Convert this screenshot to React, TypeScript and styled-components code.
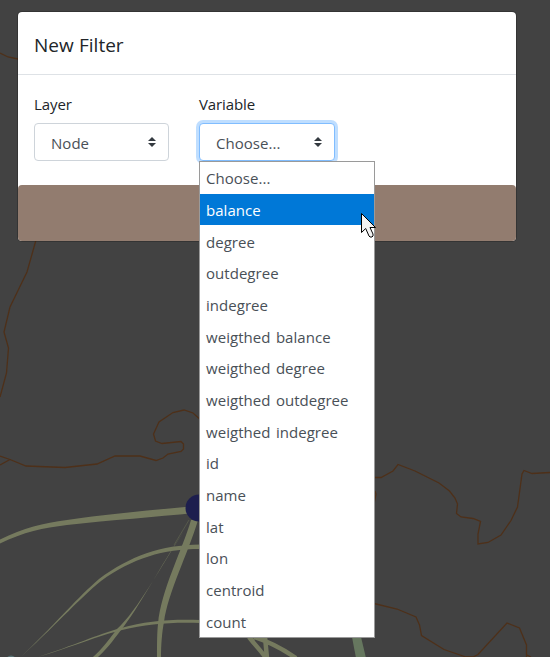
import React from "react";
import styled, { createGlobalStyle } from "styled-components";

const GlobalStyle = createGlobalStyle`
  * { box-sizing: border-box; }
  body {
    margin: 0;
    background: #424242;
    color: #212529;
    font-family: "Open Sans", "Noto Sans", sans-serif;
    font-size: 15px;
    line-height: 24px;
    letter-spacing: 0.04px;
    word-spacing: 1.5px;
  }
`;

const Page = styled.div`
  position: relative;
  width: 550px;
  height: 657px;
  overflow: hidden;
  padding: 11px 0 0 17px;
`;

const MapLayer = styled.svg`
  position: absolute;
  inset: 0;
  display: block;
`;

const Dialog = styled.section`
  position: relative;
  width: 500px;
  height: 231px;
  display: flex;
  flex-direction: column;
  border: 1px solid rgba(0, 0, 0, 0.2);
  border-radius: 5px;
  background: #fff;
  background-clip: padding-box;
`;

const DialogHeader = styled.header`
  height: 63px;
  padding: 16px;
  border-bottom: 1px solid #dee2e6;
`;

const Title = styled.h5`
  margin: 0;
  font-size: 19px;
  font-weight: 400;
  line-height: 34px;
  letter-spacing: -0.02px;
  word-spacing: 0.5px;
`;

const DialogBody = styled.div`
  flex: 1;
  display: grid;
  grid-template-columns: 135px 136px;
  column-gap: 30px;
  padding: 17px 16px 0;
`;

const DialogFooter = styled.footer`
  height: 56px;
  border-radius: 4px;
  background: #927c6f;
`;

const Field = styled.div`
  position: relative;
`;

const Label = styled.div`
  margin-bottom: 7px;
  letter-spacing: -0.1px;
`;

const SelectBox = styled.div<{ $focused?: boolean }>`
  display: flex;
  align-items: center;
  justify-content: space-between;
  height: 38px;
  padding: 2px 12px 0 16px;
  border: 1px solid ${(p) => (p.$focused ? "#80bdff" : "#ced4da")};
  border-radius: 4px;
  background: #fff;
  color: #495057;
  box-shadow: ${(p) => (p.$focused ? "0 0 0 3px rgba(0, 123, 255, 0.25)" : "none")};
`;

const Arrows = styled.svg`
  width: 8px;
  height: 10px;
  margin-top: -2px;
`;

const OptionList = styled.ul`
  position: absolute;
  top: 69px;
  left: 0;
  width: 176px;
  height: 477px;
  margin: 0;
  padding: 0;
  list-style: none;
  display: grid;
  grid-template-rows: repeat(15, 1fr);
  border: 1px solid #9a9a9a;
  background: #fff;
  color: #495057;
`;

const Option = styled.li<{ $active: boolean }>`
  padding: 4.3px 6px 0;
  background: ${(p) => (p.$active ? "#0078d7" : "transparent")};
  color: ${(p) => (p.$active ? "#fff" : "inherit")};
`;

const Pointer = styled.svg`
  position: absolute;
  left: 361px;
  top: 212px;
`;

const options = [
  "Choose...", "balance", "degree", "outdegree", "indegree",
  "weigthed balance", "weigthed degree", "weigthed outdegree", "weigthed indegree",
  "id", "name", "lat", "lon", "centroid", "count",
];

const borders = [
  "M0 53 L8 57 L18 59",
  "M36 240 L27 272 L10 307 L4 332 L8.500 348 L6.500 373 L0 397",
  "M0 456 L10 459.500 L26 466 L65 467.500 L97 464 L115 456 H140 L156 460.500 L163 458 L168 454 L181 451.500 L183.500 449 V444 L181 441.500 L162 443.500 L155.500 441 L153.500 434 L159 422 L173 412.500 L184 410 L193 413 L203 422",
  "M0 465 L10 459.500",
  "M374 477.500 H381 L393 471 L398 464.500 L415 471 L439 483 L449.500 491 L455 498 L457.500 504 L456.500 513.500 L461 517 L473 518.500 L480.500 521.500 L478 534 V544 L488 542.500 L501 535 L511 520.500 L517.500 507 L522 474 L524 470.500 L532 473.500 L550 472.500",
  "M375 491 L376 494 L374 504",
  "M374 603.500 L397 609 L416 617 L419.500 625 L421.500 635.500 L444 649.500 L466 657 H473 L478 654.500 L507 623 L519.500 628 L526.500 645 V657 M526 654.500 L531 657",
];

const ribbons = [
  "M-1 540 C23 528 43 523 67 520 C105 514 155 510 195 506 V513 C155 517 112 520 67 525 C43 528 23 532 -1 544Z",
  "M22 656 C63 616 76 599 99 579 C130 556 161 545 200 544.500 V549 C163 549 133 558 101 581 C78 600 63 618 22 656Z",
  "M38 657 C75 645 96 635 121 628 C146 621 170 619 200 620 V623 C171 622 147 624 122 630 C97 636 75 646 38 657Z",
  "M184 531 C161 566 138 610 117 629 C108 641 102 649 93 657 H98 C109 647 117 635 121 630 C139 608 160 566 184 531Z",
  "M191 520 C182 551 161 590 158 624 C157 633 157 645 157 658 H161 C161 645 162 632 164 622 C168 592 188 554 198 520Z",
];

const ArrowsIcon = () => (
  <Arrows viewBox="0 0 4 5"><path fill="#343a40" d="M2 0L0 2h4zm0 5L0 3h4z" /></Arrows>
);

export default function App() {
  return (
    <Page>
      <GlobalStyle />
      <MapLayer width="550" height="657" viewBox="0 0 550 657">
        {borders.map((d) => <path key={d} d={d} fill="none" stroke="#4e3019" strokeWidth="1.300" />)}
        {ribbons.map((d) => <path key={d} d={d} fill="#757a5e" />)}
        <path d="M189 520 L174 545" stroke="#5f634f" strokeWidth="0.700" />
        <path d="M249 637 C256 646 262 652 266 658 M265 637 L267 658 M254 637 C270 642 284 650 296 658" fill="none" stroke="#757a5e" strokeWidth="4.500" />
        <path d="M352 637 H361 L366 658 H356Z" fill="#66775f" />
        <circle cx="199" cy="508" r="13.500" fill="#1d1e4e" />
        <circle cx="11" cy="661" r="5.500" fill="#587274" />
      </MapLayer>
      <Dialog>
        <DialogHeader><Title>New Filter</Title></DialogHeader>
        <DialogBody>
          <Field>
            <Label>Layer</Label>
            <SelectBox>Node<ArrowsIcon /></SelectBox>
          </Field>
          <Field>
            <Label>Variable</Label>
            <SelectBox $focused>Choose...<ArrowsIcon /></SelectBox>
            <OptionList>
              {options.map((name) => <Option key={name} $active={name === "balance"}>{name}</Option>)}
            </OptionList>
          </Field>
        </DialogBody>
        <DialogFooter />
      </Dialog>
      <Pointer width="16" height="27" viewBox="0 0 16 27">
        <path d="M.5 1.500 V20.500 L4.700 16.500 L8 24 L9 25 H11 L12 24 V22 L9 15.500 H14.500Z" fill="#f3f3f3" stroke="#000" />
      </Pointer>
    </Page>
  );
}
